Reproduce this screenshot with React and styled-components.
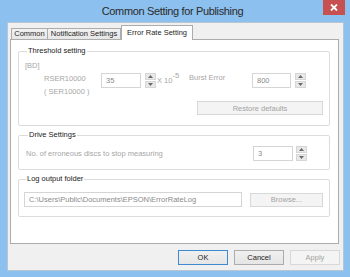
import styled, { createGlobalStyle } from 'styled-components';

const GlobalStyle = createGlobalStyle`
  html, body {
    margin: 0;
    padding: 0;
    overflow: hidden;
  }
  body {
    font-family: "Liberation Sans", Arial, sans-serif;
  }
`;

const Window = styled.div`
  width: 350px;
  height: 277px;
  box-sizing: border-box;
  background: #8cc0ee;
  display: flex;
  flex-direction: column;
`;

const TitleBar = styled.div`
  height: 22px;
  flex: none;
  display: grid;
  grid-template-columns: 30px 1fr 30px;
  padding-right: 5px;
`;

const Title = styled.div`
  grid-column: 2;
  text-align: center;
  font-size: 11px;
  letter-spacing: -0.35px;
  line-height: 23px;
  color: #2b2b2b;
  font-family: "Liberation Sans", Arial, sans-serif;
`;

const CloseButton = styled.div`
  grid-column: 3;
  justify-self: end;
  width: 22px;
  height: 15px;
  background: #c75050;
  display: flex;
  align-items: center;
  justify-content: center;
`;

const Client = styled.div`
  flex: 1;
  margin: 0 6px 6px 7px;
  background: #f0f0f0;
  border: 1px solid #b8c6d4;
  padding: 3px 4px 0 2px;
  display: flex;
  flex-direction: column;
`;

const TabStrip = styled.div`
  display: flex;
  align-items: flex-end;
  height: 14px;
  margin-bottom: -1px;
  position: relative;
  z-index: 1;
`;

const Tab = styled.div`
  box-sizing: border-box;
  width: ${p => p.$w};
  height: ${p => (p.$active ? '15px' : '12px')};
  margin-left: ${p => (p.$first ? '1px' : '0')};
  border: 1px solid #acacac;
  border-left-width: ${p => (p.$first || p.$active ? '1px' : '0')};
  border-bottom: ${p => (p.$active ? 'none' : '1px solid #acacac')};
  background: ${p => (p.$active ? '#ffffff' : 'linear-gradient(#f2f2f2, #e6e6e6)')};
  font-size: 7.5px;
  line-height: ${p => (p.$active ? '13px' : '10px')};
  text-align: center;
  color: #1e1e1e;
  white-space: nowrap;
`;

const Panel = styled.div`
  box-sizing: border-box;
  height: 205px;
  background: #ffffff;
  border: 1px solid #acacac;
  padding: 6px 8px 0 7px;
  display: flex;
  flex-direction: column;
  gap: 4px;
`;

const Group = styled.fieldset`
  margin: 0;
  border: 1px solid #dcdcdc;
  border-radius: 2px;
  padding: ${p => p.$pad};
  min-width: 0;
`;

const Legend = styled.legend`
  padding: 0 1px;
  margin-left: 2px;
  font-size: 7.5px;
  line-height: 10px;
  color: #1a1a1a;
`;

const Dim = styled.div`
  font-size: 7.5px;
  line-height: 10px;
  color: #a6a6a6;
  white-space: nowrap;
`;

const MainRow = styled.div`
  display: flex;
  align-items: flex-start;
  margin-top: 2px;
`;

const LabelStack = styled.div`
  width: 57px;
  margin-left: 19px;
  font-size: 7.5px;
  line-height: 13px;
  color: #a6a6a6;
  white-space: nowrap;
`;

const FieldWrap = styled.div`
  display: flex;
  align-items: flex-start;
  gap: ${p => p.$gap || '4px'};
`;

const TextBox = styled.div`
  box-sizing: border-box;
  width: ${p => p.$w};
  height: 15px;
  border: 1px solid #d5d5d5;
  background: #fff;
  font-size: 7.5px;
  line-height: 13px;
  padding-left: 4px;
  color: #8a8a8a;
  white-space: nowrap;
  overflow: hidden;
`;

const Spinner = styled.div`
  display: flex;
  flex-direction: column;
  width: 11px;
  height: 15px;
  gap: 1px;
`;

const SpinHalf = styled.div`
  flex: 1;
  background: #e8e8e8;
  border: 1px solid #d6d6d6;
  display: flex;
  align-items: center;
  justify-content: center;
`;

const Multiplier = styled.div`
  width: 32px;
  margin-left: 1px;
  padding-top: 3px;
  font-size: 7.5px;
  line-height: 10px;
  color: #a6a6a6;
  white-space: nowrap;
  sup {
    font-size: 7.5px;
    position: relative;
    top: -5px;
    vertical-align: baseline;
  }
`;

const BurstLabel = styled.div`
  width: 63px;
  font-size: 7.5px;
  line-height: 10px;
  color: #a6a6a6;
`;

const FlatButton = styled.div`
  box-sizing: border-box;
  width: ${p => p.$w};
  height: ${p => p.$h || '14px'};
  border: 1px solid ${p => (p.$default ? '#3d8ad0' : p.$disabled ? '#d8d8d8' : '#acacac')};
  background: ${p => (p.$disabled ? '#f4f4f4' : 'linear-gradient(#f0f0f0, #e5e5e5)')};
  color: ${p => (p.$disabled ? '#a3a3a3' : '#1e1e1e')};
  font-size: 7.5px;
  display: flex;
  align-items: center;
  justify-content: center;
  white-space: nowrap;
`;

const RightRow = styled.div`
  display: flex;
  justify-content: flex-end;
  margin-top: 3px;
`;

const SpreadRow = styled.div`
  display: flex;
  align-items: center;
  justify-content: space-between;
`;

const ButtonBar = styled.div`
  display: flex;
  justify-content: flex-end;
  gap: 6px;
  margin: 6px -1px 0 0;
`;

const Arrow = ({ up }) => (
  <svg width="5" height="3" viewBox="0 0 5 3">
    <path d={up ? 'M0 3 L2.5 0 L5 3 Z' : 'M0 0 L2.5 3 L5 0 Z'} fill="#6a6a6a" />
  </svg>
);

const Spin = () => (
  <Spinner>
    <SpinHalf><Arrow up /></SpinHalf>
    <SpinHalf><Arrow /></SpinHalf>
  </Spinner>
);

const App = () => {
  return (
    <Window>
      <GlobalStyle />
      <TitleBar>
        <Title>Common Setting for Publishing</Title>
        <CloseButton>
          <svg width="8" height="7" viewBox="0 0 8 7">
            <path d="M1 0.5 L7 6.5 M7 0.5 L1 6.5" stroke="#fff" strokeWidth="1.8" />
          </svg>
        </CloseButton>
      </TitleBar>
      <Client>
        <TabStrip>
          <Tab $first $w="37px">Common</Tab>
          <Tab $w="73px">Notification Settings</Tab>
          <Tab $active $w="72px">Error Rate Setting</Tab>
        </TabStrip>
        <Panel>
          <Group $pad="5px 6px 10px 6px">
            <Legend>Threshold setting</Legend>
            <Dim>[BD]</Dim>
            <MainRow>
              <LabelStack>
                <div style={{ marginTop: -1 }}>RSER10000</div>
                <div>( SER10000 )</div>
              </LabelStack>
              <FieldWrap>
                <TextBox $w="40px">35</TextBox>
                <Spin />
              </FieldWrap>
              <Multiplier>X 10<sup>-5</sup></Multiplier>
              <BurstLabel>Burst Error</BurstLabel>
              <FieldWrap>
                <TextBox $w="39px">800</TextBox>
                <Spin />
              </FieldWrap>
            </MainRow>
            <RightRow>
              <FlatButton $w="126px" $disabled>Restore defaults</FlatButton>
            </RightRow>
          </Group>
          <Group $pad="6px 22px 8px 7px">
            <Legend>Drive Settings</Legend>
            <SpreadRow>
              <Dim>No. of erroneous discs to stop measuring</Dim>
              <FieldWrap $gap="3px">
                <TextBox $w="40px">3</TextBox>
                <Spin />
              </FieldWrap>
            </SpreadRow>
          </Group>
          <Group $pad="8px 6px 9px 5px">
            <Legend>Log output folder</Legend>
            <SpreadRow>
              <TextBox $w="218px">C:\Users\Public\Documents\EPSON\ErrorRateLog</TextBox>
              <FlatButton $w="73px" $disabled>Browse...</FlatButton>
            </SpreadRow>
          </Group>
        </Panel>
        <ButtonBar>
          <FlatButton $w="50px" $h="15px" $default>OK</FlatButton>
          <FlatButton $w="50px" $h="15px">Cancel</FlatButton>
          <FlatButton $w="50px" $h="15px" $disabled>Apply</FlatButton>
        </ButtonBar>
      </Client>
    </Window>
  );
};

export default App;
